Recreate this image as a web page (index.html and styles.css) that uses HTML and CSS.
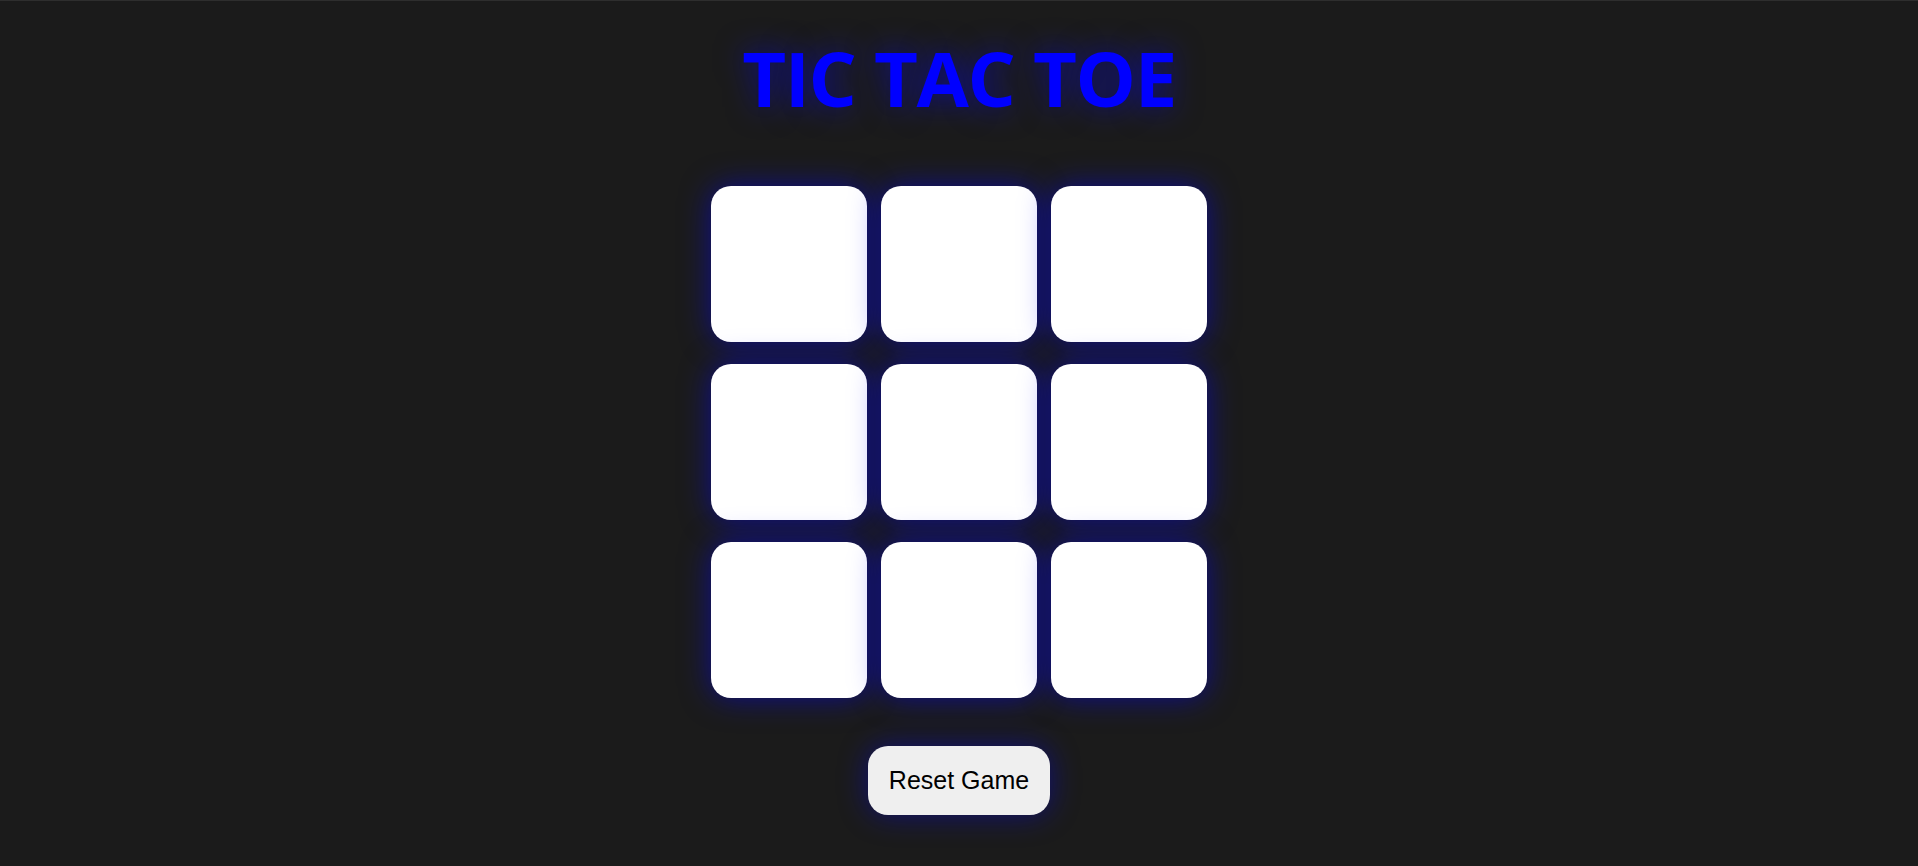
FILE: index.html
```html
<!DOCTYPE html>
<html lang="en">
<head>
<meta charset="utf-8">
<title>Tic Tac Toe</title>
<link rel="stylesheet" href="styles.css">
</head>
<body>
<main class="page">
  <h1 class="title">TIC TAC TOE</h1>
  <div class="board">
    <div class="cell"></div>
    <div class="cell"></div>
    <div class="cell"></div>
    <div class="cell"></div>
    <div class="cell"></div>
    <div class="cell"></div>
    <div class="cell"></div>
    <div class="cell"></div>
    <div class="cell"></div>
  </div>
  <button class="reset">Reset Game</button>
</main>
</body>
</html>
```

FILE: styles.css
```css
html, body {
  margin: 0;
  padding: 0;
  background: #1b1b1b;
  height: 100%;
}

.page {
  border-top: 1px solid #2e2e2e;
  min-height: 100%;
  box-sizing: border-box;
  display: flex;
  flex-direction: column;
  align-items: center;
}

.title {
  margin: 25px 0 0;
  font-family: "Open Sans", "Noto Sans", sans-serif;
  font-weight: 700;
  font-size: 76px;
  line-height: 104px;
  letter-spacing: -1.4px;
  color: #0000ff;
  text-shadow: 0 0 30px rgba(0, 0, 255, 0.55);
}

.board {
  margin-top: 56px;
  display: grid;
  grid-template-columns: repeat(3, 156px);
  grid-auto-rows: 156px;
  column-gap: 14px;
  row-gap: 22px;
}

.cell {
  background: #ffffff;
  border-radius: 20px;
  box-shadow: 0 0 30px rgba(0, 0, 255, 0.5);
}

.reset {
  margin-top: 48px;
  padding: 20px 21px;
  font-family: "Liberation Sans", Arial, sans-serif;
  font-size: 25px;
  line-height: 29px;
  color: #000;
  background: #efefef;
  border: none;
  border-radius: 20px;
  box-shadow: 0 0 30px rgba(0, 0, 255, 0.4);
  cursor: pointer;
}
```
